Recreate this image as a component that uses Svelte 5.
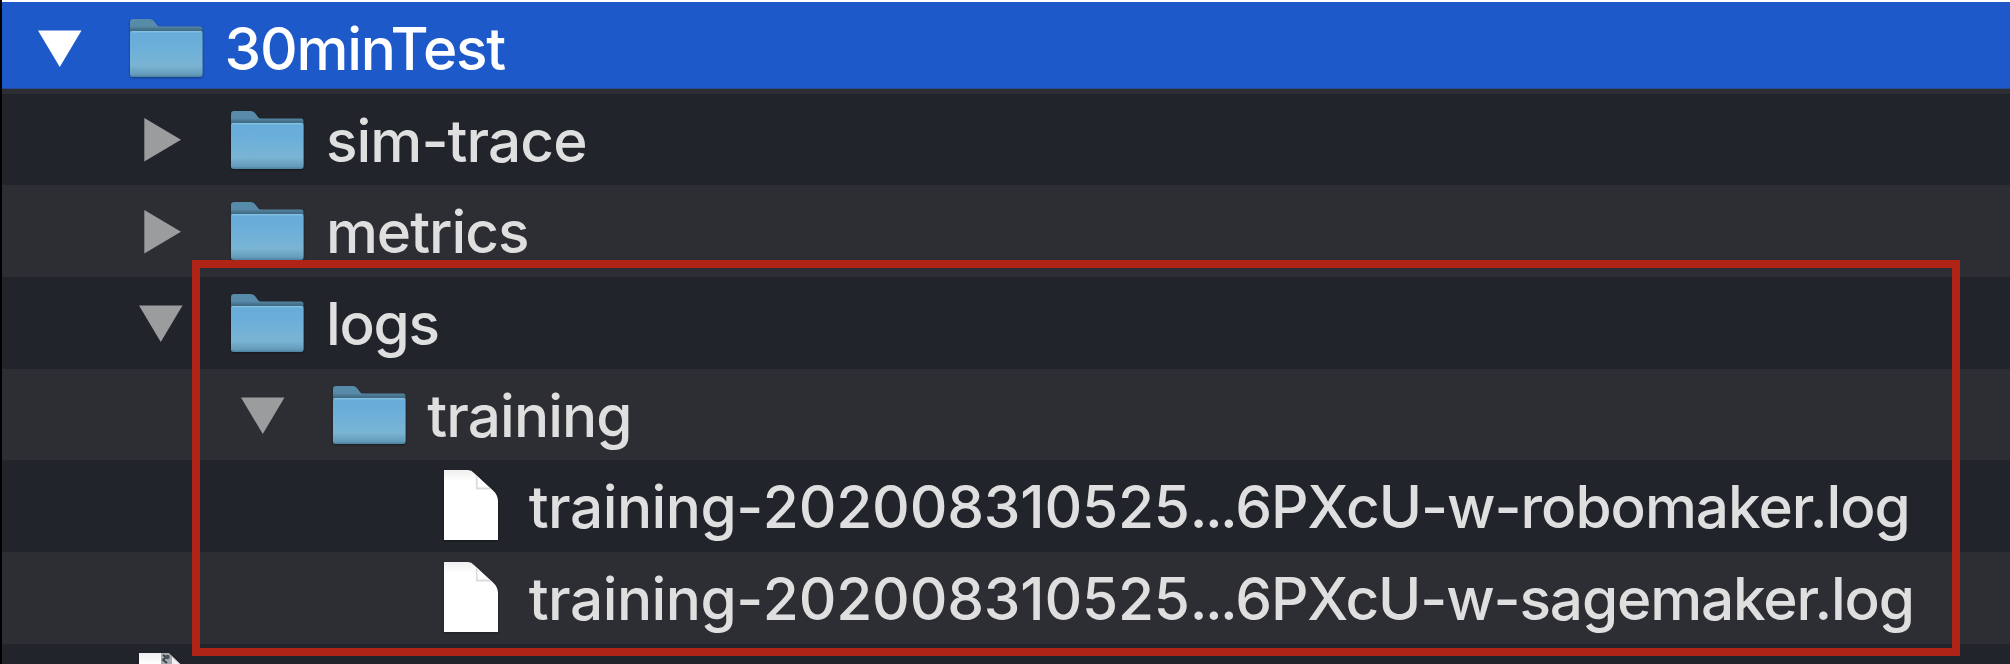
<script>
  const rows = [
    { parts: [['30minTest', -1.25]], level: 0, kind: 'folder', open: true, selected: true },
    { parts: [['sim-trace', -0.9]], level: 1, kind: 'folder', open: false },
    { parts: [['metrics', -1]], level: 1, kind: 'folder', open: false },
    { parts: [['logs', -1.2]], level: 1, kind: 'folder', open: true },
    { parts: [['training', -0.9]], level: 2, kind: 'folder', open: true },
    { parts: [['training-', -0.5], ['202008310525', -0.2], ['...', -2.6], ['6PXcU-w-robomaker.log', -1]], level: 3, kind: 'file' },
    { parts: [['training-', -0.5], ['202008310525', -0.2], ['...', -2.6], ['6PXcU-w-sagemaker.log', -1.14]], level: 3, kind: 'file' },
  ];
</script>

<div class="finder">
  <svg class="defs" width="0" height="0" aria-hidden="true">
    <defs>
      <linearGradient id="front" x1="0" y1="0" x2="0" y2="1">
        <stop offset="0" stop-color="#8ac5e6" />
        <stop offset=".05" stop-color="#68acd9" />
        <stop offset=".3" stop-color="#6aafda" />
        <stop offset=".75" stop-color="#7ab4d4" />
        <stop offset=".94" stop-color="#659cbb" />
        <stop offset="1" stop-color="#4b819c" />
      </linearGradient>
      <linearGradient id="back" x1="0" y1="0" x2="0" y2="1">
        <stop offset="0" stop-color="#568ca9" />
        <stop offset=".13" stop-color="#588ba9" />
        <stop offset=".2" stop-color="#416c85" />
      </linearGradient>
      <linearGradient id="paper" x1="0" y1="0" x2="0" y2="1">
        <stop offset="0" stop-color="#efefef" />
        <stop offset=".16" stop-color="#ffffff" />
      </linearGradient>
    </defs>
  </svg>

  {#each rows as row}
    <div class="row" class:selected={row.selected} style="--level: {row.level}">
      <span class="toggle">
        {#if row.kind === 'folder'}
          {#if row.open}
            <svg width="44" height="44" viewBox="0 0 44 44"><path d="M0 4.500H43.500L21.750 41Z" /></svg>
          {:else}
            <svg width="44" height="44" viewBox="0 0 44 44"><path d="M5.300 0V43.500L42 21.700Z" /></svg>
          {/if}
        {/if}
      </span>
      <span class="icon {row.kind}">
        {#if row.kind === 'folder'}
          <svg width="73" height="58" viewBox="0 0 73 58">
            <path d="M0 55V3Q0 0 3 0H20Q22 0 24 2L27 6Q28 7.5 30 7.5H70Q72.5 7.5 72.5 10V55Z" fill="url(#back)" />
            <path d="M0 14Q0 12 2 12H70.500Q72.500 12 72.500 14V55.500Q72.500 58 70 58H2.5Q0 58 0 55.500Z" fill="url(#front)" />
          </svg>
        {:else}
          <svg width="73" height="70" viewBox="0 0 73 70">
            <path d="M10 0H34Q37.500 0 40 3L59 20.500Q64 25 64 31V70H10Z" fill="url(#paper)" />
            <path d="M43 6V18H55Z" fill="#fff" />
            <path d="M42.800 6V18.500H56" fill="none" stroke="#dcdcdc" stroke-width="1.800" />
          </svg>
        {/if}
      </span>
      <span class="label">{#each row.parts as [text, spacing]}<span style="letter-spacing: {spacing}px">{text}</span>{/each}</span>
    </div>
  {/each}

  <div class="row" style="--level: 0">
    <span class="toggle"></span>
    <span class="icon file">
      <svg width="73" height="70" viewBox="0 0 73 70">
        <path d="M9 0H36Q40 1 42 3L60 20.500V70H9Z" fill="url(#paper)" />
        <path d="M31 0H39L49 11H31Z" fill="#a7abac" />
        <path d="M33 2L36 4L33 7L37 10" fill="none" stroke="#35434b" stroke-width="1.800" />
        <circle cx="37.500" cy="4" r="2.200" fill="#4c555b" />
        <path d="M42 4V11H49Z" fill="#f2f2f2" />
      </svg>
    </span>
  </div>

  <div class="highlight"></div>
</div>

<style>
  :global(body) {
    margin: 0;
    overflow: hidden;
    background: #22242b;
  }
  .finder {
    position: relative;
    box-sizing: border-box;
    width: 2010px;
    height: 664px;
    overflow: hidden;
    padding-top: 2px;
    border-left: 2px solid #000;
    background: #22242b;
    color: #dfdfdf;
    font-family: Inter, "Liberation Sans", sans-serif;
  }
  .finder::before {
    content: "";
    position: absolute;
    top: 0;
    left: -2px;
    width: 2010px;
    height: 2px;
    background: #fff;
  }
  .defs {
    position: absolute;
  }
  .row {
    display: flex;
    align-items: flex-start;
    box-sizing: border-box;
    height: 91.68px;
    padding-left: calc(18px + var(--level) * 101.4px);
    background: #22242b;
  }
  .row:nth-of-type(odd) {
    background: #2d2e33;
  }
  .row.selected {
    background: linear-gradient(#1d59c9 0 86px, #244b91 86px 87px, #2d2e33 87px);
    color: #fff;
  }
  svg {
    display: block;
    overflow: visible;
  }
  .toggle {
    display: flex;
    justify-content: center;
    width: 80px;
    margin-top: 24.300px;
    fill: #9b9c9e;
  }
  .selected .toggle {
    fill: #fff;
  }
  .icon {
    width: 73px;
    margin: 16.900px 0 0 30px;
    filter: drop-shadow(0 1.500px 1px rgba(0, 0, 0, 0.35));
  }
  .icon.file {
    margin-top: 9.500px;
  }
  .label {
    margin-left: 21.500px;
    font-size: 58.500px;
    font-weight: 500;
    line-height: 93px;
    white-space: nowrap;
  }
  .highlight {
    position: absolute;
    left: 190px;
    top: 260px;
    box-sizing: border-box;
    width: 1768px;
    height: 396px;
    border: 8px solid #b02418;
  }
</style>
